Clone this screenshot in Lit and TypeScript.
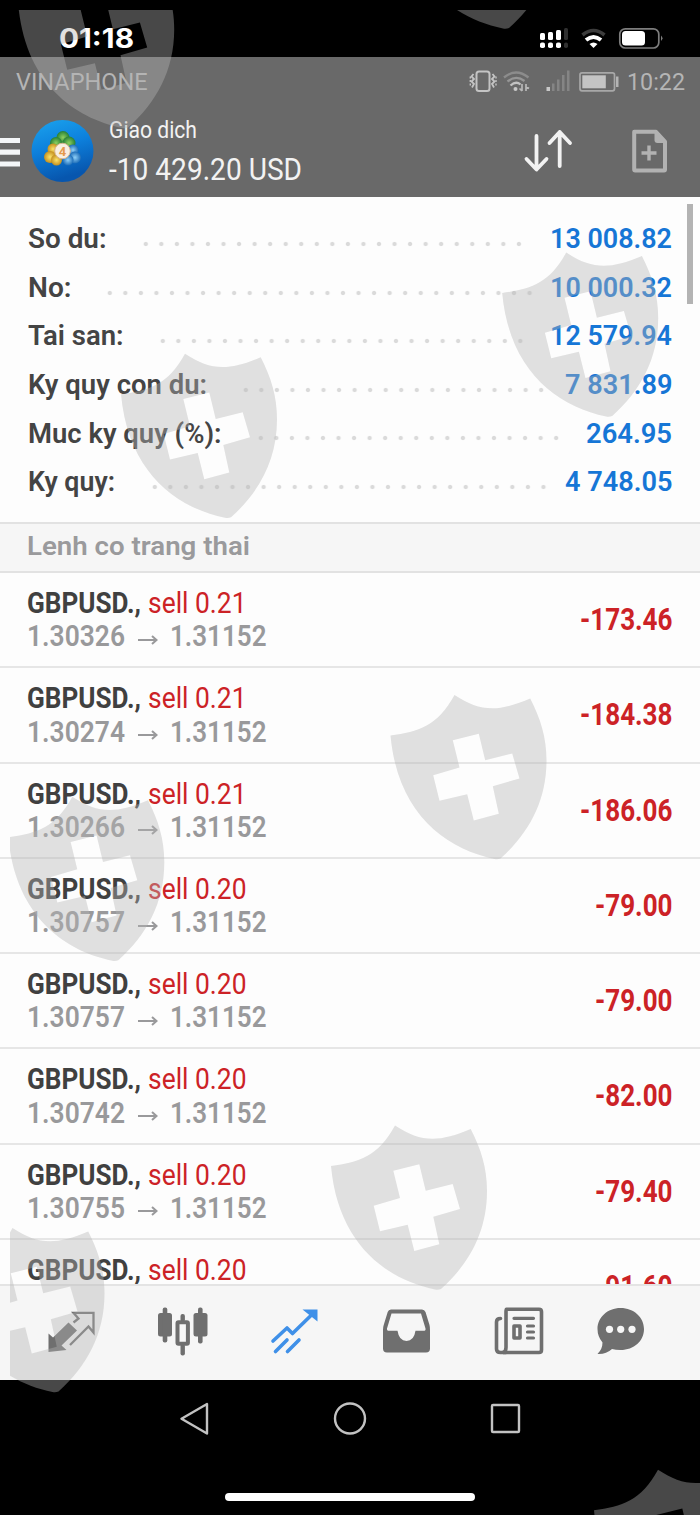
import { LitElement, html, css, svg, nothing } from "lit";
import { customElement, property } from "lit/decorators.js";
import { styleMap } from "lit/directives/style-map.js";

/** Single-line text squeezed or stretched horizontally to a given advance width. */
@customElement("fit-text")
class FitText extends LitElement {
  @property({ type: Number }) w = 0;
  @property() text = "";
  static styles = css`
    :host { display: inline-block; white-space: pre; flex: none; }
    .t { display: inline-block; transform-origin: 0 50%; white-space: pre; }
  `;
  updated() {
    const t = this.renderRoot.querySelector(".t") as HTMLElement;
    this.style.width = this.w + "px";
    t.style.transform = "none";
    const natural = t.getBoundingClientRect().width;
    if (natural) t.style.transform = `scaleX(${this.w / natural})`;
  }
  render() {
    return html`<span class="t">${this.text}</span>`;
  }
}

const SUMMARY = [
  { label: "So du:", lw: 78.5, value: "13 008.82", vw: 122, dots: 25, gap: 23 },
  { label: "No:", lw: 43.5, value: "10 000.32", vw: 122, dots: 28, gap: 12.5 },
  { label: "Tai san:", lw: 95.5, value: "12 579.94", vw: 122, dots: 24, gap: 21.5 },
  { label: "Ky quy con du:", lw: 179, value: "7 831.89", vw: 107.5, dots: 20, gap: 15.5 },
  { label: "Muc ky quy (%):", lw: 193.5, value: "264.95", vw: 86, dots: 20, gap: 22 },
  { label: "Ky quy:", lw: 87, value: "4 748.05", vw: 107.5, dots: 26, gap: 13 },
];

const ORDERS = [
  ["0.21", "1.30326", "-173.46"],
  ["0.21", "1.30274", "-184.38"],
  ["0.21", "1.30266", "-186.06"],
  ["0.20", "1.30757", "-79.00"],
  ["0.20", "1.30757", "-79.00"],
  ["0.20", "1.30742", "-82.00"],
  ["0.20", "1.30755", "-79.40"],
  ["0.20", "", "-91.60"],
];

const SHIELD =
  "M0 0C28-4 47-9 64-40.5C89-24 107-23 139.7-37C150-17 156 2 156 25C156 66 138 98 110 123Q107 124.3 104 123.5C54 113 7 77 0 0Z" +
  "M62.3 4.7L88.3-1.7L94.7 24.7L121.7 18L129 43L102.3 50.7L108.3 78.3L83.3 85L76.7 58.7L49 65.3L42.7 39.7L69 32Z";

const SHIELDS = [
  [18.2, 4.5], [399, -95], [121, 394.3], [502.2, 293], [390.5, 735.5],
  [8.3, 837.3], [331, 1166], [-51.5, 1268.5], [594, 1510.3],
];

@customElement("app-root")
class AppRoot extends LitElement {
  static styles = css`
    :host {
      display: block; position: relative; width: 700px; height: 1515px;
      overflow: hidden; background: #000; font-family: Roboto, sans-serif;
    }
    svg { display: block; flex: none; }
    .screen { display: flex; flex-direction: column; height: 1515px; }
    .phone-bar {
      height: 57px; box-sizing: border-box; padding: 20px 37px 0 59px; flex: none;
      display: flex; justify-content: space-between; align-items: flex-start;
      font: 700 27px/37px Inter, sans-serif; color: #fff;
    }
    .phone-icons { margin-top: 4px; }
    .header { height: 140px; flex: none; background: #696969; display: flex; flex-direction: column; }
    .os-bar {
      height: 50px; display: flex; justify-content: space-between; align-items: center;
      padding: 0 15px 0 15.5px; font-size: 23.5px; line-height: 30px; color: #b5b5b5;
    }
    .os-right { display: flex; gap: 7px; align-items: center; }
    .toolbar { height: 90px; display: flex; align-items: flex-start; color: #f2f2f2; }
    .toolbar svg { margin-top: 8px; }
    .titles { flex: 1; display: flex; flex-direction: column; margin-left: 13px; }
    .title { font-size: 24.8px; line-height: 30px; margin-top: 8px; height: 34px; }
    .total { font-size: 32px; line-height: 40px; }
    .summary {
      height: 325px; box-sizing: border-box; padding: 18.2px 28px 0 27.5px;
      background: #fdfdfd; flex: none; position: relative;
    }
    .srow {
      height: 48.6px; display: flex; align-items: center;
      font-weight: 600; font-size: 26.9px; line-height: 48.6px; color: #444;
    }
    .dots {
      height: 6px; margin: 9px 0 0 auto; flex: none;
      background: radial-gradient(circle at 50% 50%, #dadada 1.6px, transparent 2.6px) 0 0 / 15.55px 6px repeat-x;
    }
    .val { color: #1676d6; }
    .scroll { position: absolute; left: 687px; top: 7px; width: 6px; height: 100px; background: #b3b3b3; }
    .section {
      height: 51px; box-sizing: border-box; border-top: 2px solid #e2e2e2; border-bottom: 2px solid #e2e2e2;
      background: #f6f6f6; padding-left: 27px; flex: none; font-weight: 600; font-size: 26.7px; line-height: 45px; color: #9a9a9c;
    }
    .list { height: 711px; overflow: hidden; background: #fdfdfd; flex: none; }
    .order {
      height: 95.25px; box-sizing: border-box; border-bottom: 2px solid #e6e6e6; padding: 0 28px 0 27px;
      display: flex; justify-content: space-between; font-size: 29.8px; line-height: 33px;
    }
    .info { padding-top: 13px; }
    .line { display: flex; height: 33.2px; }
    .sym { color: #404040; font-weight: 700; margin-right: 7px; }
    .side { color: #cc2226; }
    .prices { color: #99999b; font-weight: 600; align-items: center; }
    .prices svg { margin: 8px 11.5px 0 13px; }
    .profit { color: #cc2226; font-weight: 700; font-size: 30.8px; line-height: 93px; }
    .tabs {
      height: 96px; box-sizing: border-box; border-top: 2px solid #e4e4e4; background: #f6f6f6;
      flex: none; display: flex; padding: 16px 0 0 41px; gap: 49px; color: #6f6f6f;
    }
    .nav { display: flex; justify-content: space-between; padding: 21px 178px 0 178px; }
    .home { width: 250px; height: 8px; border-radius: 4px; background: #fff; margin: 56px auto 0 225px; }
    .marks { position: absolute; left: 0; top: 0; pointer-events: none; }
  `;

  private phoneIcons() {
    return html`<svg class="phone-icons" width="124" height="30" viewBox="539 24 124 30">
      <g fill="#fff">
        <rect x="540" y="33" width="5" height="7" rx="1.5"/><rect x="548" y="32" width="5" height="8" rx="1.5"/><rect x="556" y="30" width="5" height="10" rx="1.5"/>
        <rect x="540" y="42.5" width="5" height="5.5" rx="1.8"/><rect x="548" y="42.5" width="5" height="5.5" rx="1.8"/><rect x="556" y="42.5" width="5" height="5.5" rx="1.8"/>
      </g>
      <rect x="564" y="28" width="4" height="12" rx="1.5" fill="#303030"/><rect x="564" y="42.5" width="4" height="5.5" rx="1.8" fill="#303030"/>
      <path d="M582.5 35Q593.500 26 604.5 35" fill="none" stroke="#3c3c3c" stroke-width="3.6"/>
      <path d="M586 40Q593.500 34 601 40" fill="none" stroke="#fff" stroke-width="4"/>
      <path d="M589.500 44Q593.500 41 597.500 44L593.500 48Z" fill="#fff"/>
      <rect x="619.800" y="28.800" width="39" height="19.200" rx="5.500" fill="none" stroke="#7d7d7d" stroke-width="1.700"/>
      <rect x="622" y="31" width="23" height="14.600" rx="3.500" fill="#fff"/>
      <path d="M661 35.500Q664 38.300 661 41Z" fill="#7d7d7d"/>
    </svg>`;
  }

  private osIcons() {
    return html`<svg width="152" height="28" viewBox="469 68 152 28">
      <g fill="none" stroke="#c4c4c4" stroke-width="2">
        <rect x="477.500" y="71.500" width="13" height="19.500" rx="2.500"/>
        <path d="M474.500 74l-2 2.500 2.500 2.500-2.500 2.500 2.500 2.500-2 3.500M493.500 74l2 2.500-2.500 2.500 2.500 2.500-2.500 2.500 2 3.500" stroke-width="1.800"/>
        <path d="M471.300 76.500v9M497 76.500v9" stroke-width="1.400" stroke-dasharray="2 1.500"/>
      </g>
      <g fill="none" stroke-width="2.300">
        <path d="M505 77.500Q517 67.500 529.500 77.500" stroke="#8c8c8c"/>
        <path d="M508.500 81.500Q517 74.500 525.500 81" stroke="#969696"/>
        <path d="M511.500 85.500Q517 80.500 521.500 84.500" stroke="#c2c2c2"/>
        <path d="M523 84v7M520.500 88.500l2.500 2.500M527 91v-7M527 86.500l3 2" stroke="#b8b8b8" stroke-width="1.700"/>
      </g>
      <circle cx="516.500" cy="89" r="2" fill="#c8c8c8"/>
      <rect x="547.500" y="87" width="3.500" height="4" fill="#c8c8c8"/>
      <g fill="#858585"><rect x="553" y="83.500" width="2.500" height="7.500"/><rect x="558" y="79.500" width="2.500" height="11.500"/><rect x="563" y="75" width="2.500" height="16"/><rect x="568" y="70.500" width="2.500" height="20.500"/></g>
      <rect x="581" y="72.800" width="34.500" height="18" rx="2" fill="none" stroke="#a8a8a8" stroke-width="1.700"/>
      <rect x="583.300" y="75.300" width="23.500" height="13" fill="#c4c4c4"/><rect x="617" y="76.500" width="2.500" height="10.500" fill="#b4b4b4"/>
    </svg>`;
  }

  private logo() {
    return html`<svg width="96" height="70" viewBox="0 115 96 70">
      <defs>
        <linearGradient id="sky" x1="0" y1="0" x2="0.300" y2="1"><stop offset="0" stop-color="#1ba4ee"/><stop offset="0.500" stop-color="#0d80dc"/><stop offset="1" stop-color="#0756ae"/></linearGradient>
        <radialGradient id="gr"><stop offset="0" stop-color="#8fd05e"/><stop offset="1" stop-color="#267f35"/></radialGradient>
        <radialGradient id="ye"><stop offset="0" stop-color="#fbe36a"/><stop offset="1" stop-color="#c48f1e"/></radialGradient>
        <radialGradient id="bl"><stop offset="0" stop-color="#8fd0f8"/><stop offset="1" stop-color="#1c6cb8"/></radialGradient>
      </defs>
      <path d="M0 140.500h20M0 152.200h20M0 164h20" stroke="#f4f6f8" stroke-width="5.200"/>
      <circle cx="62.500" cy="151" r="31" fill="url(#sky)"/>
      <circle cx="63" cy="137.5" r="6.5" fill="url(#gr)"/><circle cx="56" cy="143" r="6" fill="url(#gr)"/><circle cx="69" cy="143" r="6.5" fill="url(#gr)"/>
      <circle cx="53" cy="149" r="5.500" fill="url(#ye)"/><circle cx="50" cy="157" r="6" fill="url(#ye)"/><circle cx="56.5" cy="160" r="5.500" fill="url(#ye)"/>
      <circle cx="73" cy="150" r="5.500" fill="url(#bl)"/><circle cx="75" cy="157.5" r="6" fill="url(#bl)"/><circle cx="68" cy="160" r="5.500" fill="url(#bl)"/>
      <circle cx="62.500" cy="151" r="7.800" fill="#f8efe2" stroke="#d9b58e" stroke-width="1"/>
      <text x="62.500" y="155.500" text-anchor="middle" font-size="13" font-weight="700" font-family="Roboto" fill="#e59a4c">4</text>
    </svg>`;
  }

  private tabIcons() {
    return html`
      <svg width="62" height="60" viewBox="41 1302 62 60">
        <path d="M53 1337.500L68.500 1322.500L77 1330.500L61.500 1345.500L66.500 1350L48.500 1352V1333.500Z" fill="#6f6f6f"/>
        <path d="M70 1345L88.500 1326.500L93.500 1332.500V1312.800H73.500L78.500 1318.500L73.500 1322.500" fill="none" stroke="#6f6f6f" stroke-width="2.300"/>
      </svg>
      <svg width="62" height="60" viewBox="152 1302 62 60">
        <g fill="#6f6f6f">
          <rect x="158" y="1313" width="14" height="23.500" rx="2.500"/><rect x="162.700" y="1307.500" width="4.600" height="35" rx="2"/>
          <rect x="193.500" y="1313" width="14" height="23.500" rx="2.500"/><rect x="198" y="1307.500" width="4.600" height="36" rx="2"/>
          <rect x="180.500" y="1314" width="4.400" height="8" rx="2"/><rect x="180.500" y="1344" width="4.400" height="11.500" rx="2"/>
        </g>
        <rect x="177.500" y="1322.200" width="10.400" height="21.600" rx="1" fill="none" stroke="#6f6f6f" stroke-width="4"/>
      </svg>
      <svg width="62" height="60" viewBox="263 1302 62 60">
        <g fill="none" stroke="#3f90e8" stroke-width="3.600" stroke-linecap="round" stroke-linejoin="round">
          <path d="M273 1341L287 1328L292.500 1333.500L312 1314.500"/><path d="M275.500 1351.500L287 1340M287.500 1351.500L299 1340"/>
        </g>
        <path d="M302.500 1309.500H317.500V1321.500Z" fill="#3f90e8"/>
      </svg>
      <svg width="62" height="60" viewBox="374 1302 62 60">
        <path fill-rule="evenodd" fill="#6f6f6f" d="M391 1309.500H422Q424.500 1309.500 425.500 1312L429.500 1325Q430 1327 430 1330V1348.500Q430 1352.500 426 1352.500H387Q383 1352.500 383 1348.500V1330Q383 1327 383.700 1325L387.700 1312Q388.500 1309.500 391 1309.500ZM391.500 1313.500L387 1328.500Q386.700 1330.800 389 1330.800H397.500Q399 1341 406.500 1341Q414 1341 415.500 1330.800H423.500Q426 1330.800 425.500 1328.500L421 1313.500Z"/>
      </svg>
      <svg width="62" height="60" viewBox="485 1302 62 60">
        <g fill="none" stroke="#6f6f6f" stroke-width="3.600" stroke-linecap="round">
          <path d="M506.500 1309.200H539Q541.500 1309.200 541.500 1311.700V1350Q541.500 1352.500 539 1352.500H503Q506 1351.500 506 1347.500V1311.700Q506 1309.200 506.500 1309.200Z"/>
          <path d="M500.500 1318.500Q496.500 1318.500 496.500 1322V1349Q496.500 1352.500 500.500 1352.500H506"/>
          <path d="M514 1318.300H533.500M527.500 1326H533.500M527.500 1332H533.500M527.500 1338H533.500" stroke-width="3.200"/>
          <rect x="514" y="1326" width="6" height="12" stroke-linejoin="round"/>
        </g>
      </svg>
      <svg width="62" height="60" viewBox="596 1302 62 60">
        <path fill="#6f6f6f" d="M620.500 1308C634 1308 644 1317.500 644 1329C644 1341 634 1350 620.500 1350Q615.500 1350 612 1349Q606 1354.500 597.500 1354Q602.500 1349 602.500 1342.500Q597.500 1336.500 597.500 1329C597.500 1317.500 607.500 1308 620.500 1308Z"/>
        <g fill="#f6f6f6"><circle cx="609.500" cy="1329.300" r="3.600"/><circle cx="620.700" cy="1329.300" r="3.600"/><circle cx="632" cy="1329.300" r="3.600"/></g>
      </svg>`;
  }

  render() {
    return html`
      <div class="screen">
        <div class="phone-bar"><fit-text .w=${75} text="01:18"></fit-text>${this.phoneIcons()}</div>
        <div class="header">
          <div class="os-bar">
            <fit-text .w=${131.5} text="VINAPHONE"></fit-text>
            <div class="os-right">${this.osIcons()}<fit-text .w=${58} text="10:22"></fit-text></div>
          </div>
          <div class="toolbar">
            ${this.logo()}
            <div class="titles">
              <fit-text class="title" .w=${88} text="Giao dich"></fit-text>
              <fit-text class="total" .w=${193} text="-10 429.20 USD"></fit-text>
            </div>
            <svg width="180" height="70" viewBox="520 115 180 70">
              <path d="M536.500 136V168M526.500 159L536.500 169.500L546.500 159M559.700 166V132M549.500 143L559.700 132L570 143" fill="none" stroke="#f2f2f2" stroke-width="3.800" stroke-linecap="round" stroke-linejoin="round"/>
              <path d="M634.200 131.800H656L665 141.500V169.500Q665 170.500 664 170.500H635.200Q634.200 170.500 634.200 169.500Z" fill="none" stroke="#b2b2b2" stroke-width="4" stroke-linejoin="round"/>
              <path d="M654.500 131.500L666 143H657.500Q654.500 143 654.500 140Z" fill="#b2b2b2"/>
              <path d="M641.500 153H656.500M649 145.500V160.500" stroke="#b2b2b2" stroke-width="3.400"/>
            </svg>
          </div>
        </div>
        <div class="summary">
          ${SUMMARY.map(
            (r) => html`<div class="srow">
              <fit-text .w=${r.lw} .text=${r.label}></fit-text>
              <div class="dots" style=${styleMap({ width: r.dots * 15.55 + "px", marginRight: r.gap + "px" })}></div>
              <fit-text class="val" .w=${r.vw} .text=${r.value}></fit-text>
            </div>`
          )}
          <div class="scroll"></div>
        </div>
        <div class="section"><fit-text .w=${223} text="Lenh co trang thai"></fit-text></div>
        <div class="list">
          ${ORDERS.map(
            ([lot, open, profit]) => html`<div class="order">
              <div class="info">
                <div class="line">
                  <fit-text class="sym" .w=${114} text="GBPUSD.,"></fit-text>
                  <fit-text class="side" .w=${98.5} .text=${"sell " + lot}></fit-text>
                </div>
                ${open
                  ? html`<div class="line prices">
                      <fit-text .w=${98} .text=${open}></fit-text>
                      <svg width="20" height="10" viewBox="0 0 20 10"><path d="M0 5H18M14 1L18.500 5L14 9" fill="none" stroke="#99999b" stroke-width="2"/></svg>
                      <fit-text .w=${96.5} text="1.31152"></fit-text>
                    </div>`
                  : nothing}
              </div>
              <fit-text class="profit" .w=${profit.length === 7 ? 92.5 : 77.5} .text=${profit}></fit-text>
            </div>`
          )}
        </div>
        <div class="tabs">${this.tabIcons()}</div>
        <div class="nav">
          <svg width="34" height="36" viewBox="178 1401 34 36"><path d="M207 1404V1433.500L181.500 1418.700Z" fill="none" stroke="#c2c2c2" stroke-width="2.400" stroke-linejoin="round"/></svg>
          <svg width="34" height="36" viewBox="333 1401 34 36"><circle cx="350" cy="1418.500" r="15" fill="none" stroke="#c2c2c2" stroke-width="2.400"/></svg>
          <svg width="34" height="36" viewBox="488 1401 34 36"><rect x="492" y="1405" width="27" height="27" rx="1" fill="none" stroke="#c2c2c2" stroke-width="2.400"/></svg>
        </div>
        <div class="home"></div>
      </div>
      <svg class="marks" width="700" height="1515" viewBox="0 0 700 1515">
        <clipPath id="area"><rect x="10" y="10" width="690" height="1505"/></clipPath>
        <g clip-path="url(#area)" fill="#b4b4b4" fill-opacity="0.4" fill-rule="evenodd">
          ${SHIELDS.map(([x, y]) => svg`<path d=${SHIELD} transform=${`translate(${x} ${y})`} />`)}
        </g>
      </svg>`;
  }
}
